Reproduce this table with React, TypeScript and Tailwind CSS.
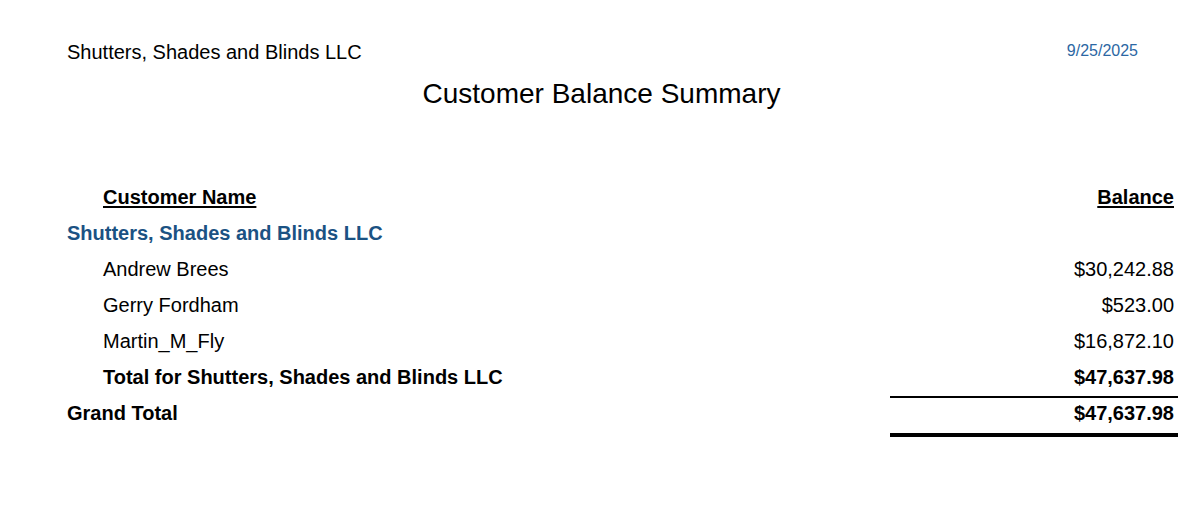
const rows = [
  { name: 'Andrew Brees', balance: '$30,242.88' },
  { name: 'Gerry Fordham', balance: '$523.00' },
  { name: 'Martin_M_Fly', balance: '$16,872.10' },
]

export default function App() {
  return (
    <div className="min-h-screen w-full bg-white text-black font-['Liberation_Sans',Arial,sans-serif]">
      {/* report header */}
      <div className="flex items-start justify-between pt-[40px] pl-[67px] pr-[65px]">
        <div className="text-[20px] leading-[24px]">Shutters, Shades and Blinds LLC</div>
        <div className="text-[16px] leading-[21px] text-[#2c67a3]">9/25/2025</div>
      </div>
      <div className="mt-[14px] text-center text-[28px] leading-[32px]">
        Customer Balance Summary
      </div>

      {/* table */}
      <div className="mt-[69px] pl-[67px] pr-[25px] text-[20px] leading-[24px]">
        <div className="flex h-[36px] items-center">
          <div className="flex-1 pl-[36px] font-bold underline underline-offset-[2px]">
            Customer Name
          </div>
          <div className="w-[288px] pr-[4px] text-right font-bold underline underline-offset-[2px]">
            Balance
          </div>
        </div>
        <div className="flex h-[36px] items-center font-bold text-[#1b5283]">
          Shutters, Shades and Blinds LLC
        </div>
        {rows.map((r) => (
          <div key={r.name} className="flex h-[36px] items-center">
            <div className="flex-1 pl-[36px]">{r.name}</div>
            <div className="w-[288px] pr-[4px] text-right">{r.balance}</div>
          </div>
        ))}
        <div className="flex h-[36px] items-center font-bold">
          <div className="flex-1 pl-[36px]">Total for Shutters, Shades and Blinds LLC</div>
          <div className="w-[288px] pr-[4px] text-right">$47,637.98</div>
        </div>
        <div className="mt-[1px] flex font-bold">
          <div className="flex h-[41px] flex-1 items-center border-t-2 border-b-4 border-transparent pb-[6px]">
            Grand Total
          </div>
          <div className="flex h-[41px] w-[288px] items-center justify-end border-t-2 border-b-4 border-black pr-[4px] pb-[6px]">
            $47,637.98
          </div>
        </div>
      </div>
    </div>
  )
}
